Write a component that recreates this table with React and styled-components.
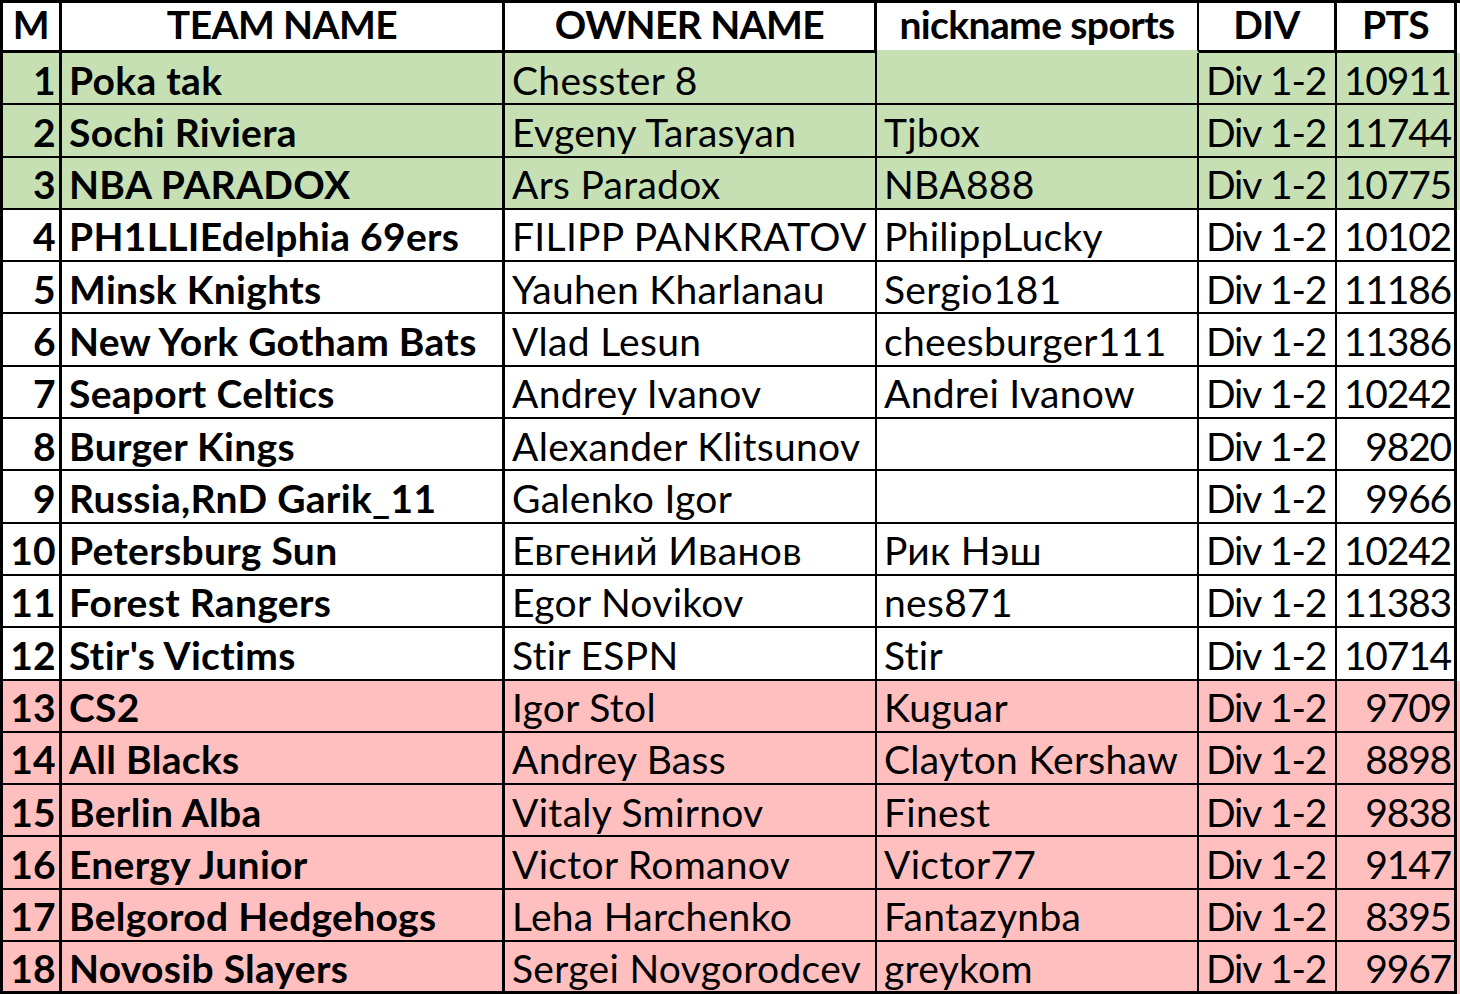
import React from "react";
import styled, { createGlobalStyle } from "styled-components";

const GREEN = "#c6e0b4";
const PINK = "#ffbfbf";

const GlobalStyle = createGlobalStyle`
  html, body {
    margin: 0;
    padding: 0;
    background: #ffffff;
  }
  body {
    font-family: Lato, "Noto Sans", sans-serif;
    color: #000;
  }
`;

const Sheet = styled.div`
  display: grid;
  grid-template-columns: 62px 443px 372px 322px 138px 120px 3px;
  grid-template-rows: 50px repeat(18, 52.3px);
  border-top: 3px solid #000;
  width: 1460px;
  overflow: hidden;
`;

const Cell = styled.div`
  box-sizing: border-box;
  display: flex;
  align-items: flex-end;
  justify-content: ${p => (p.align === "right" ? "flex-end" : "flex-start")};
  padding: 0 ${p => (p.align === "right" ? "3px" : "0")} 0 ${p => (p.align === "right" ? "0" : "7px")};
  background: ${p => p.fill || "#fff"};
  border-right: ${p => (p.thin ? "2px" : "3px")} solid #000;
  border-bottom: ${p => (p.last ? "3px" : "2px")} solid #000;
  border-left: ${p => (p.first ? "3px solid #000" : "none")};
  font-size: 39px;
  line-height: 1.2;
  letter-spacing: ${p => (p.numeric ? "-1.2px" : "0.3px")};
  word-spacing: ${p => (p.numeric ? "1px" : "0")};
  font-weight: ${p => (p.bold ? 700 : 400)};
  white-space: nowrap;
`;

const Head = styled(Cell)`
  justify-content: center;
  padding: 0 0 2px 0;
  font-weight: 700;
  letter-spacing: -0.6px;
  word-spacing: 0;
  border-bottom: 3px solid ${p => p.openBelow || "#000"};
`;

const Spill = styled.div`
  background: ${p => p.fill || "#fff"};
`;

const rows = [
  ["Poka tak", "Chesster 8", "", "10911"],
  ["Sochi Riviera", "Evgeny Tarasyan", "Tjbox", "11744"],
  ["NBA PARADOX", "Ars Paradox", "NBA888", "10775"],
  ["PH1LLIEdelphia 69ers", "FILIPP PANKRATOV", "PhilippLucky", "10102"],
  ["Minsk Knights", "Yauhen Kharlanau", "Sergio181", "11186"],
  ["New York Gotham Bats", "Vlad Lesun", "cheesburger111", "11386"],
  ["Seaport Celtics", "Andrey Ivanov", "Andrei Ivanow", "10242"],
  ["Burger Kings", "Alexander Klitsunov", "", "9820"],
  ["Russia,RnD Garik_11", "Galenko Igor", "", "9966"],
  ["Petersburg Sun", "Евгений Иванов", "Рик Нэш", "10242"],
  ["Forest Rangers", "Egor Novikov", "nes871", "11383"],
  ["Stir's Victims", "Stir ESPN", "Stir", "10714"],
  ["CS2", "Igor Stol", "Kuguar", "9709"],
  ["All Blacks", "Andrey Bass", "Clayton Kershaw", "8898"],
  ["Berlin Alba", "Vitaly Smirnov", "Finest", "9838"],
  ["Energy Junior", "Victor Romanov", "Victor77", "9147"],
  ["Belgorod Hedgehogs", "Leha Harchenko", "Fantazynba", "8395"],
  ["Novosib Slayers", "Sergei Novgorodcev", "greykom", "9967"],
];

const fillFor = i => (i < 3 ? GREEN : i >= 12 ? PINK : "#fff");

export default function App() {
  return (
    <>
      <GlobalStyle />
      <Sheet>
        <Head first>M</Head>
        <Head>TEAM NAME</Head>
        <Head>OWNER NAME</Head>
        <Head thin openBelow={GREEN}>nickname sports</Head>
        <Head>DIV</Head>
        <Head>PTS</Head>
        <Spill />
        {rows.map(([team, owner, nick, pts], i) => {
          const fill = fillFor(i);
          const last = i === rows.length - 1;
          return (
            <React.Fragment key={i}>
              <Cell first fill={fill} last={last} align="right" bold>{i + 1}</Cell>
              <Cell fill={fill} last={last} bold>{team}</Cell>
              <Cell fill={fill} last={last} thin>{owner}</Cell>
              <Cell fill={fill} last={last} thin>{nick}</Cell>
              <Cell fill={fill} last={last} thin numeric>Div 1-2</Cell>
              <Cell fill={fill} last={last} align="right" numeric>{pts}</Cell>
              <Spill fill={fill} />
            </React.Fragment>
          );
        })}
      </Sheet>
    </>
  );
}
